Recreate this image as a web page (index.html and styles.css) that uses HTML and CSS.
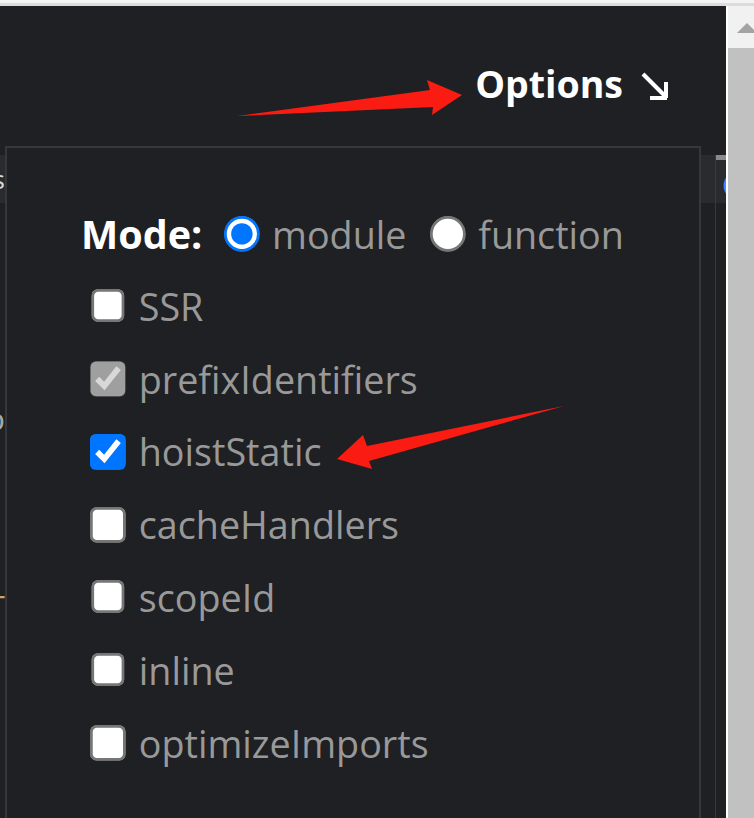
FILE: index.html
```html
<!DOCTYPE html>
<html lang="en">
<head>
<meta charset="utf-8">
<title>Options</title>
<link rel="stylesheet" href="styles.css">
</head>
<body>
<div class="topline"></div>
<div class="window">
  <div class="viewport">
    <header class="header">
      <span class="options-title">Options
        <svg class="corner-arrow" width="30" height="30" viewBox="0 0 30 30" aria-hidden="true">
          <path d="M3 3 L26 26" stroke="#fff" stroke-width="4" fill="none"/>
          <path d="M26 11 V27 M10 27 H27" stroke="#fff" stroke-width="4" fill="none"/>
        </svg>
      </span>
    </header>
    <div class="editors">
      <section class="pane pane-left">
        <div class="tabbar"><div class="edge-clip"><span class="tab-text">Templates</span></div></div>
        <div class="edge-clip code">
          <div class="code-line line-a"><span>foo</span></div>
          <div class="code-line line-b"><span class="tan">T</span></div>
        </div>
      </section>
      <section class="pane pane-right">
        <div class="tabbar"><div class="tab-active"><span class="tab-icon">(</span></div></div>
      </section>
    </div>

    <div class="options-panel">
      <div class="mode-row">
        <span class="mode-label">Mode:</span>
        <label class="opt radio-opt"><input type="radio" name="mode" checked> module</label>
        <label class="opt radio-opt"><input type="radio" name="mode"> function</label>
      </div>
      <ul class="opts">
        <li><label class="opt"><input type="checkbox"> SSR</label></li>
        <li><label class="opt"><input type="checkbox" checked disabled> prefixIdentifiers</label></li>
        <li><label class="opt"><input type="checkbox" checked> hoistStatic</label></li>
        <li><label class="opt"><input type="checkbox"> cacheHandlers</label></li>
        <li><label class="opt"><input type="checkbox"> scopeId</label></li>
        <li><label class="opt"><input type="checkbox"> inline</label></li>
        <li><label class="opt"><input type="checkbox"> optimizeImports</label></li>
      </ul>
    </div>
  </div>
  <div class="scrollbar">
    <div class="sb-button"><span class="sb-arrow"></span></div>
    <div class="sb-thumb"></div>
  </div>
</div>
<svg class="annotations" width="754" height="818" viewBox="0 0 754 818" aria-hidden="true">
  <polygon points="237,116 433,107 432,115 462,95 427,80 430,90" fill="#fa1c12"/>
  <polygon points="564,406 367,446 363,435 337,459 372,469 369,461" fill="#fa1c12"/>
</svg>
</body>
</html>
```

FILE: styles.css
```css
* { box-sizing: border-box; }
html, body { margin: 0; height: 100%; }
body {
  background: #1f2023;
  font-family: "Open Sans", "Noto Sans", sans-serif;
  overflow: hidden;
  position: relative;
}
.topline {
  height: 6px;
  background: #f3f3f3;
  border-bottom: 3px solid #dcdcdf;
}
.window {
  display: flex;
  height: 812px;
}
.viewport {
  flex: 0 0 726px;
  position: relative;
  overflow: hidden;
  display: flex;
  flex-direction: column;
}
.header {
  height: 149px;
  flex: 0 0 149px;
  padding: 52px 56px 0 0;
  display: flex;
  justify-content: flex-end;
  align-items: flex-start;
}
.options-title {
  color: #fff;
  font-weight: 700;
  font-size: 37.5px;
  line-height: 1.362;
  display: flex;
  align-items: center;
  gap: 17px;
}
.corner-arrow { display: block; margin-top: 4px; }

.editors { flex: 1; display: flex; }
.pane-left { flex: 0 0 716px; border-right: 1px solid #38393c; }
.pane-right { flex: 1; }
.tabbar { height: 48px; background: #2a2b2e; }
.edge-clip {
  width: 5px;
  overflow: hidden;
  display: flex;
  justify-content: flex-end;
  white-space: nowrap;
}
.tabbar .edge-clip { height: 48px; align-items: center; }
.tab-text { color: #d8d8d8; font-size: 26px; }
.code { flex-direction: column; align-items: flex-end; }
.code-line { height: 30px; display: flex; align-items: center; font-size: 28px; color: #a8a8a8; font-family: "DejaVu Sans Mono", monospace; }
.line-a { margin-top: 202px; }
.line-b { margin-top: 157px; }
.tan { color: #c8a46e; }
.tab-active {
  height: 48px;
  border-top: 5px solid #8a8a8a;
  padding: 14px 0 0 7px;
  overflow: hidden;
}
.tab-icon { color: #3b8cff; font-size: 20px; font-weight: 700; line-height: 1; }

.options-panel {
  position: absolute;
  left: 5px;
  top: 140px;
  width: 696px;
  height: 700px;
  background: #1f2023;
  border: 2px solid #36373a;
  padding: 50px 0 0 74px;
}
.mode-row {
  height: 72px;
  display: flex;
  align-items: center;
  gap: 21px;
}
.mode-label {
  color: #fff;
  font-weight: 700;
  font-size: 39.5px;
  margin-right: 1px;
}
.opt {
  display: flex;
  align-items: center;
  gap: 13px;
  color: #999;
  font-size: 37.7px;
}
.radio-opt { gap: 12px; margin-right: 3px; }
.opt input {
  zoom: 2.75;
  width: 13px;
  height: 13px;
  margin: 0;
}
.opts {
  list-style: none;
  margin: 0;
  padding: 0 0 0 9px;
}
.opts li {
  height: 72.8px;
  display: flex;
  align-items: center;
}

.scrollbar {
  flex: 0 0 28px;
  border-left: 2px solid #fff;
  background: #f1f1f1;
  display: flex;
  flex-direction: column;
}
.sb-button {
  height: 42px;
  flex: 0 0 42px;
  padding: 17px 0 0 9px;
}
.sb-arrow {
  display: block;
  width: 0;
  height: 0;
  border-left: 10px solid transparent;
  border-right: 10px solid transparent;
  border-bottom: 10px solid #a3a3a3;
}
.sb-thumb { flex: 1; background: #c1c1c1; }

.annotations {
  position: absolute;
  left: 0;
  top: 0;
  pointer-events: none;
}
```
